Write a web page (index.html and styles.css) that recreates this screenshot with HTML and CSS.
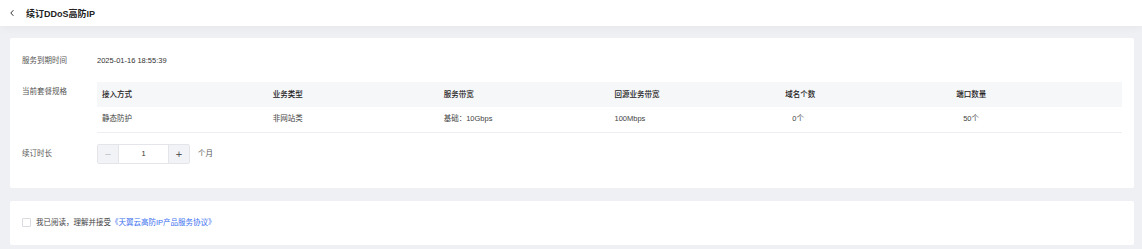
FILE: index.html
```html
<!DOCTYPE html>
<html lang="zh-CN">
<head>
    <meta charset="UTF-8">
    <meta name="viewport" content="width=device-width, initial-scale=1.0">
    <title>续订DDoS高防IP</title>
    <link rel="stylesheet" href="styles.css">
</head>
<body>
    <header class="page-header">
        <span class="back">
            <svg width="8" height="8" viewBox="0 0 8 8"><path d="M5.4 1.2L2.8 4l2.6 2.8" fill="none" stroke="#333" stroke-width="1"/></svg>
        </span>
        <h1>续订DDoS高防IP</h1>
    </header>

    <main class="content">
        <section class="card info">
            <div class="field">
                <div class="field-label">服务到期时间</div>
                <div class="field-value">2025-01-16 18:55:39</div>
            </div>
            <div class="field spec">
                <div class="field-label">当前套餐规格</div>
                <div class="table-wrap">
                    <table class="spec-table">
                        <thead>
                            <tr>
                                <th>接入方式</th>
                                <th>业务类型</th>
                                <th>服务带宽</th>
                                <th>回源业务带宽</th>
                                <th>域名个数</th>
                                <th>端口数量</th>
                            </tr>
                        </thead>
                        <tbody>
                            <tr>
                                <td>静态防护</td>
                                <td>非网站类</td>
                                <td>基础：10Gbps</td>
                                <td>100Mbps</td>
                                <td class="count">0个</td>
                                <td class="count">50个</td>
                            </tr>
                        </tbody>
                    </table>
                </div>
            </div>
            <div class="field duration">
                <div class="field-label">续订时长</div>
                <div class="stepper">
                    <button class="step minus" disabled>−</button>
                    <input class="step-input" type="text" value="1">
                    <button class="step plus">+</button>
                </div>
                <span class="unit">个月</span>
            </div>
        </section>

        <section class="card agree">
            <label class="agree-line">
                <span class="checkbox"></span>
                我已阅读，理解并接受<a href="#" class="link">《天翼云高防IP产品服务协议》</a>
            </label>
        </section>
    </main>
</body>
</html>
```

FILE: styles.css
```css
* {
    box-sizing: border-box;
}
body {
    margin: 0;
    background-color: #eff0f4;
    font-family: "Liberation Sans", "Noto Sans CJK SC", sans-serif;
    font-size: 7.5px;
    color: #333;
}
.page-header {
    height: 26px;
    background: #fff;
    display: flex;
    align-items: center;
    padding-left: 8px;
    box-shadow: 0 2px 8px rgba(0, 0, 0, 0.04);
}
.back {
    display: flex;
    width: 8px;
    height: 8px;
    margin-right: 10px;
}
.page-header h1 {
    margin: 0;
    font-size: 9px;
    font-weight: 700;
    color: #222;
}
.content {
    padding: 12px 8px 5px 10px;
}
.card {
    background: #fff;
    border-radius: 2px;
}
.info {
    padding: 17px 12px 24px 12px;
}
.field {
    display: flex;
    align-items: flex-start;
    line-height: 12px;
}
.field-label {
    width: 75px;
    flex-shrink: 0;
    color: #555;
}
.field-value {
    color: #333;
}
.spec {
    margin-top: 15px;
}
.spec .field-label {
    padding-top: 4px;
}
.table-wrap {
    flex: 1;
    min-width: 0;
}
.spec-table {
    width: 100%;
    border-collapse: collapse;
    table-layout: fixed;
}
.spec-table th,
.spec-table td {
    text-align: left;
    padding: 0 5px;
    height: 25px;
    line-height: 12px;
}
.spec-table th {
    background: #f6f7f9;
    font-weight: 500;
    color: #222;
}
.spec-table td {
    color: #444;
    border-bottom: 1px solid #eceef2;
}
.spec-table td.count {
    padding-left: 12px;
}
.duration {
    margin-top: 11px;
    align-items: center;
}
.stepper {
    display: flex;
    height: 20px;
    border: 1px solid #e3e5ea;
    border-radius: 2px;
    overflow: hidden;
}
.step {
    width: 20px;
    border: none;
    background: #f2f3f6;
    color: #555;
    font-size: 11px;
    padding: 0;
    font-family: inherit;
    line-height: 18px;
}
.step.minus {
    color: #c0c4cc;
}
.step-input {
    width: 51px;
    border: none;
    border-left: 1px solid #e3e5ea;
    border-right: 1px solid #e3e5ea;
    text-align: center;
    font-size: 7.5px;
    font-family: inherit;
    color: #333;
    padding: 0;
    outline: none;
}
.unit {
    margin-left: 8px;
    color: #555;
}
.agree {
    margin-top: 13px;
    height: 44px;
    display: flex;
    align-items: center;
    padding-left: 12px;
}
.agree-line {
    display: flex;
    align-items: center;
    color: #444;
    line-height: 12px;
}
.checkbox {
    width: 9px;
    height: 9px;
    border: 1px solid #d9dbe0;
    border-radius: 1px;
    margin-right: 5px;
    background: #fff;
}
.link {
    color: #3a6ff0;
    text-decoration: none;
}
```
